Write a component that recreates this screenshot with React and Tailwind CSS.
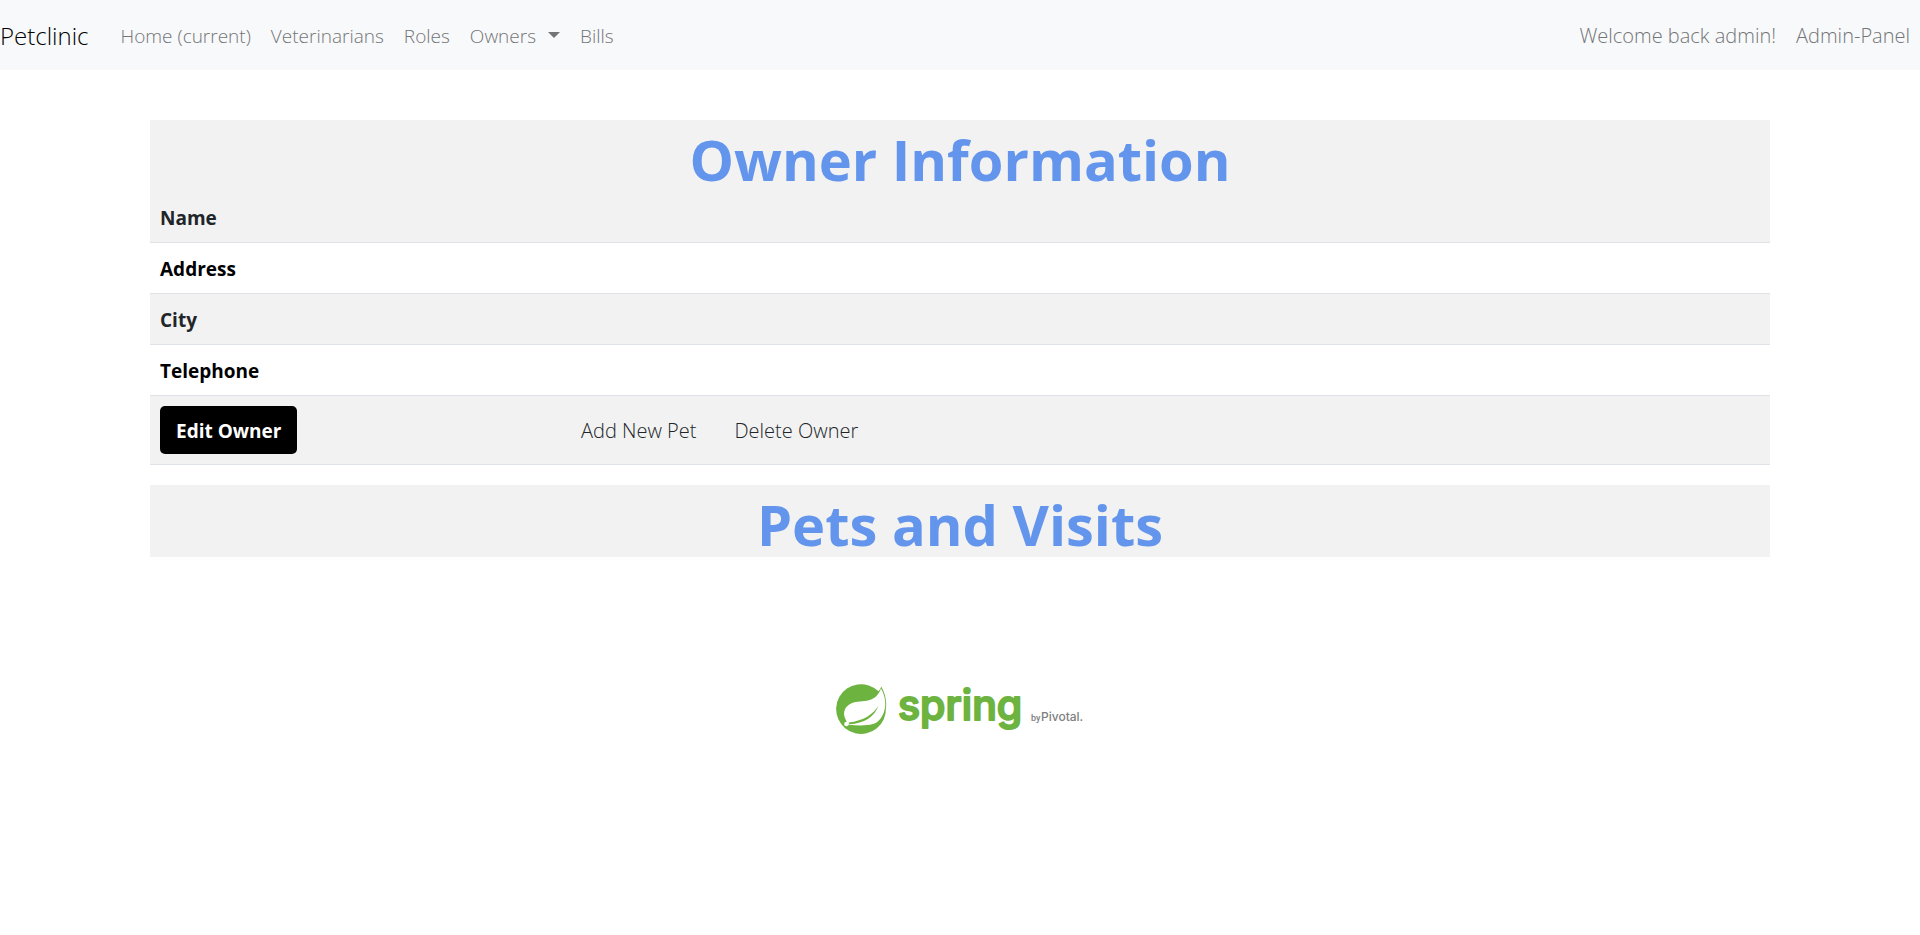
const navLink = "block px-[10px] text-[#737576] hover:text-black";
const heading =
  "pt-[7px] text-center text-[56px] leading-[65px] font-bold text-[#6495ed] bg-[#f2f2f2]";
const label = "px-[10px] pt-[11px] pb-[9px] font-bold";
const action = "block px-4 pt-[10px] pb-2";

function SpringLogo() {
  return (
    <svg
      viewBox="0 0 260 80"
      className="h-20 w-[260px]"
      role="img"
      aria-label="spring by Pivotal."
    >
      <g transform="translate(6 14)">
        <path
          fill="#6db33f"
          d="M45.300 3.500C44.500 5.500 43.600 7 42.500 8.300A24.900 24.900 0 1 0 49.900 25C51 18 49 10 45.300 3.500Z"
        />
        <path
          fill="#fff"
          d="M45 5.500C42.500 12 39 15.500 33 17.300C27 19 21 17.800 15.500 20.200C9 23 6.800 29 8.800 34.500C9.800 37.500 11 39.500 13 41.800C21 42.600 31 43.200 38.500 40.500C45.500 37.500 48.800 29 49.300 22C49.500 16 47.800 10.500 45 5.500Z"
        />
        <path
          fill="#6db33f"
          d="M42.500 22.500C37 31.500 28 37.500 12.500 39.600L13.500 41.200C28 40.500 38.500 34 42.500 22.500Z"
        />
        <circle cx="10.500" cy="41" r="2.300" fill="#fff" />
      </g>
      <text
        x="68"
        y="51"
        fill="#6db33f"
        stroke="#6db33f"
        strokeWidth="2"
        strokeLinejoin="round"
        fontSize="41"
        fontWeight="500"
        fontFamily="Inter, sans-serif"
      >
        spring
      </text>
      <text x="201" y="52" fill="#808080" fontSize="9" fontWeight="500" fontFamily="Roboto, sans-serif">
        by
      </text>
      <text x="211" y="52" fill="#808080" fontSize="12" fontWeight="500" fontFamily="Inter, sans-serif">
        Pivotal.
      </text>
    </svg>
  );
}

export default function App() {
  return (
    <div className="min-h-screen bg-white font-['Open_Sans','Noto_Sans',sans-serif] text-[19px] leading-[30px] text-[#212529]">
      <nav className="flex items-center bg-[#f8f9fb] pt-[21px] pb-[19px] font-light">
        <a href="#home" className="mr-[22px] text-[24px] text-black">
          Petclinic
        </a>
        <ul className="flex">
          <li><a href="#home" className={navLink}>Home (current)</a></li>
          <li><a href="#vets" className={navLink}>Veterinarians</a></li>
          <li><a href="#roles" className={navLink}>Roles</a></li>
          <li>
            <button type="button" className="flex items-center px-[10px] text-[#737576]">
              Owners
              <span className="mb-[2px] ml-3 border-x-6 border-t-6 border-x-transparent border-t-[#737576]" />
            </button>
          </li>
          <li><a href="#bills" className={navLink}>Bills</a></li>
        </ul>
        <ul className="ml-auto flex text-[20px]">
          <li><a href="#profile" className={navLink}>Welcome back admin!</a></li>
          <li><a href="#admin" className={navLink}>Admin-Panel</a></li>
        </ul>
      </nav>

      <main className="mx-auto mt-[50px] max-w-[1620px]">
        <h1 className={heading}>Owner Information</h1>
        <table className="w-full table-fixed border-collapse text-left">
          <tbody>
            <tr className="border-b border-[#dee2e6] bg-[#f2f2f2]">
              <th scope="row" className={`${label} w-1/4`}>Name</th>
              <td />
            </tr>
            <tr className="border-b border-[#dee2e6] text-black">
              <th scope="row" className={label}>Address</th>
              <td />
            </tr>
            <tr className="border-b border-[#dee2e6] bg-[#f2f2f2]">
              <th scope="row" className={label}>City</th>
              <td />
            </tr>
            <tr className="border-b border-[#dee2e6] text-black">
              <th scope="row" className={label}>Telephone</th>
              <td />
            </tr>
            <tr className="border-b border-[#dee2e6] bg-[#f2f2f2]">
              <th scope="row" className="p-[10px]">
                <button type="button" className={`${action} rounded-[5px] bg-black font-bold text-white`}>
                  Edit Owner
                </button>
              </th>
              <td className="p-[10px]">
                <div className="flex gap-[6px] text-[20px] font-light">
                  <button type="button" className={action}>Add New Pet</button>
                  <button type="button" className={action}>Delete Owner</button>
                </div>
              </td>
            </tr>
          </tbody>
        </table>
        <h2 className={`${heading} mt-5`}>Pets and Visits</h2>
      </main>

      <footer className="mt-28 flex justify-center">
        <SpringLogo />
      </footer>
    </div>
  );
}
